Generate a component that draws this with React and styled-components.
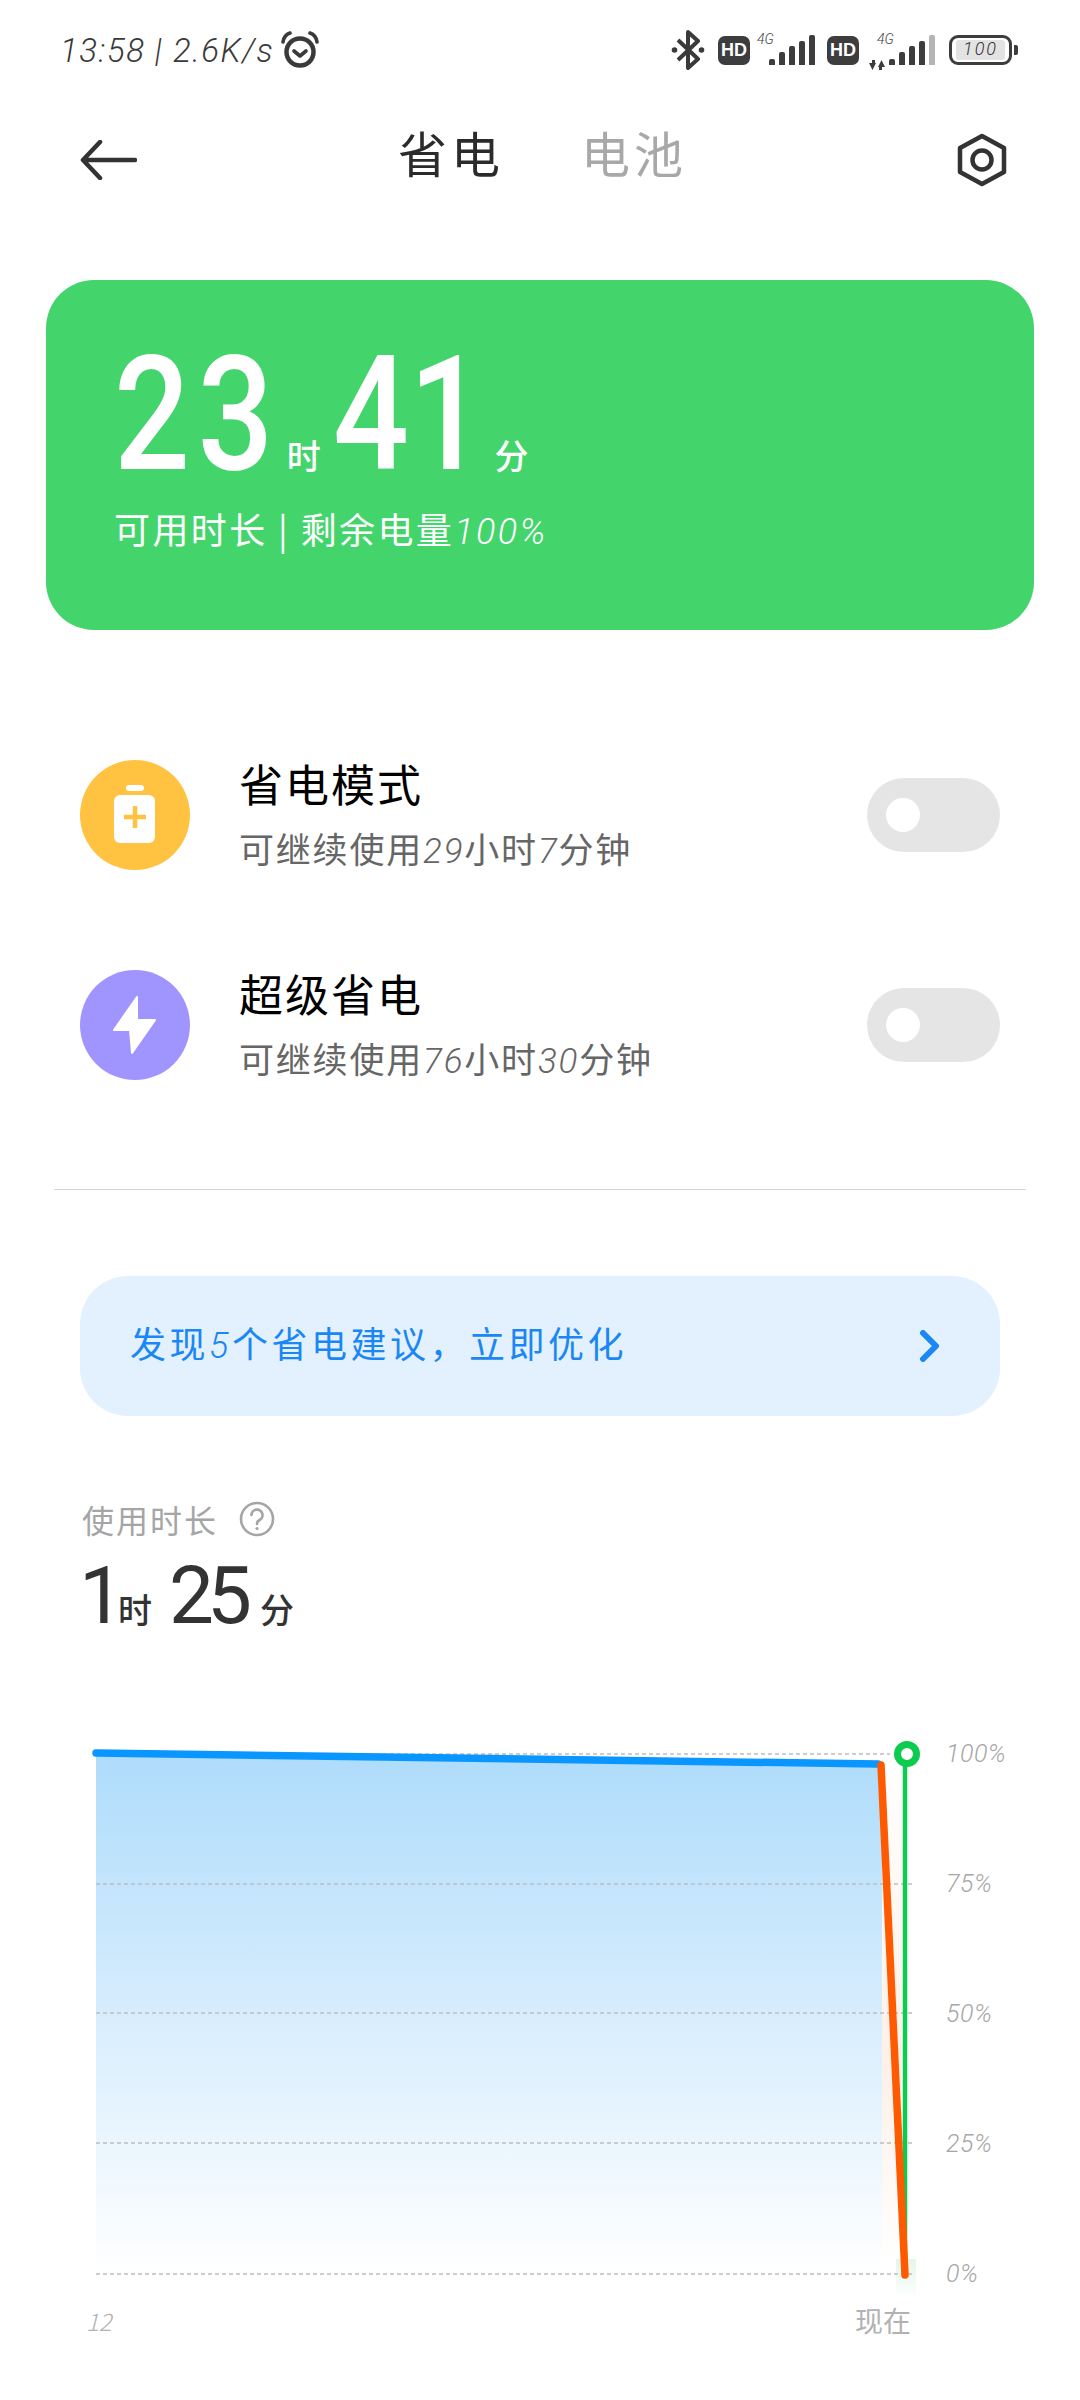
import React from "react";
import styled, { createGlobalStyle } from "styled-components";

const Global = createGlobalStyle`
  html, body { margin: 0; padding: 0; background: #fff; }
  body { font-family: Roboto, "Noto Sans CJK SC", sans-serif; }
`;

const Page = styled.div`
  width: 1080px;
  height: 2400px;
  overflow: hidden;
  background: #fff;
  display: flex;
  flex-direction: column;
`;

const Num = styled.span`
  font-family: Roboto, sans-serif;
  font-style: italic;
  font-weight: 300;
`;

/* status bar */
const StatusBar = styled.div`
  height: 100px;
  flex: none;
  display: flex;
  align-items: center;
  padding: 0 62px 0 60px;
  color: #3a3a3a;
`;

const Clock = styled.span`
  font-family: Roboto, sans-serif;
  font-style: italic;
  font-weight: 300;
  font-size: 33px;
  letter-spacing: 1.5px;
  white-space: nowrap;
`;

const StatusIcons = styled.div`
  margin-left: auto;
  display: flex;
  align-items: center;
`;

const HdBadge = styled.span`
  width: 32px;
  height: 29px;
  border-radius: 7px;
  background: #3d3d3d;
  color: #fff;
  font: 700 18px "Liberation Sans", sans-serif;
  display: flex;
  align-items: center;
  justify-content: center;
  margin-left: ${(p) => p.$left}px;
`;

const Signal = styled.span`
  position: relative;
  display: flex;
  align-items: flex-end;
  gap: 4px;
  height: 30px;
  margin-left: ${(p) => p.$left}px;
`;

const Bar = styled.i`
  display: block;
  width: 6px;
  height: ${(p) => p.$h}px;
  border-radius: 2px 2px 0 0;
  background: ${(p) => (p.$dim ? "#b5b5b5" : "#3d3d3d")};
`;

const NetLabel = styled.span`
  position: absolute;
  top: -4px;
  left: ${(p) => p.$x}px;
  font-family: Roboto, sans-serif;
  font-style: italic;
  font-weight: 300;
  font-size: 14px;
  color: #3d3d3d;
`;

const Battery = styled.span`
  width: 63px;
  height: 30px;
  box-sizing: border-box;
  border: 3.5px solid #3d3d3d;
  border-radius: 9px;
  margin-left: 14px;
  padding: 2px 4px;
  display: flex;
`;

const BatteryFill = styled.span`
  flex: 1;
  background: #e3e3e3;
  border-radius: 3px;
  font-family: Roboto, sans-serif;
  font-style: italic;
  font-weight: 300;
  font-size: 18px;
  letter-spacing: 2px;
  line-height: 18px;
  text-align: center;
  color: #333;
`;

const BatteryNub = styled.span`
  width: 4px;
  height: 10px;
  margin-left: 2px;
  border-radius: 0 2px 2px 0;
  background: #3d3d3d;
`;

/* header */
const Header = styled.div`
  height: 120px;
  flex: none;
  display: flex;
  align-items: center;
  padding: 0 73px 0 80px;
`;

const Tabs = styled.div`
  display: flex;
  gap: 77px;
  margin-left: 261px;
  margin-top: -16px;
`;

const Tab = styled.span`
  font-family: "Noto Sans CJK SC", sans-serif;
  font-size: 49px;
  line-height: 56px;
  letter-spacing: 4px;
  color: ${(p) => (p.$active ? "#2b2b2b" : "#a8a8a8")};
`;

const Settings = styled.svg`
  margin-left: auto;
`;

/* green summary card */
const Card = styled.div`
  height: 350px;
  flex: none;
  box-sizing: border-box;
  margin: 60px 46px 0;
  padding: 60px 0 0 68px;
  border-radius: 48px;
  background: #43d56c;
  color: #fff;
`;

const TimeRow = styled.div`
  display: flex;
  align-items: baseline;
  height: 150px;
`;

/* the digits in the reference are narrower than Roboto's */
const BigNum = styled.span`
  font-family: Roboto, sans-serif;
  font-weight: 500;
  font-size: 159px;
  line-height: 150px;
  letter-spacing: ${(p) => p.$track || 0}px;
  transform: scaleX(0.84);
  transform-origin: 0 50%;
  margin-right: -29px;
  margin-left: ${(p) => p.$left || 0}px;
`;

const Unit = styled.span`
  font-family: "Noto Sans CJK SC", sans-serif;
  font-weight: 500;
  font-size: 34px;
  margin-left: ${(p) => p.$left}px;
`;

const CardSub = styled.div`
  margin-top: 14px;
  font-family: "Noto Sans CJK SC", sans-serif;
  font-size: 36px;
  line-height: 48px;
  letter-spacing: 2.4px;
  white-space: nowrap;
`;

/* mode rows */
const Modes = styled.div`
  margin-top: 130px;
  display: flex;
  flex-direction: column;
  gap: 100px;
`;

const Mode = styled.div`
  height: 110px;
  display: flex;
  align-items: center;
  padding: 0 80px;
`;

const ModeBadge = styled.svg`
  flex: none;
  margin-right: 49px;
`;

const ModeText = styled.div`
  display: flex;
  flex-direction: column;
  gap: 14px;
  white-space: nowrap;
`;

const ModeTitle = styled.div`
  font-family: "Noto Sans CJK SC", sans-serif;
  font-size: 44px;
  line-height: 56px;
  letter-spacing: 2px;
  color: #000;
`;

const ModeSub = styled.div`
  font-family: "Noto Sans CJK SC", sans-serif;
  font-size: 35px;
  line-height: 46px;
  letter-spacing: 1.8px;
  color: #666;
`;

const Toggle = styled.div`
  margin-left: auto;
  width: 133px;
  height: 74px;
  box-sizing: border-box;
  padding-left: 19px;
  border-radius: 37px;
  background: #e5e5e5;
  display: flex;
  align-items: center;
`;

const Thumb = styled.span`
  width: 34px;
  height: 34px;
  border-radius: 50%;
  background: #fff;
`;

const Divider = styled.div`
  height: 1px;
  flex: none;
  margin: 109px 54px 0;
  background: #d6d6d6;
`;

/* tip banner */
const Banner = styled.div`
  height: 140px;
  flex: none;
  margin: 86px 80px 0;
  padding: 0 59px 0 50px;
  border-radius: 48px;
  background: #e3f1ff;
  display: flex;
  align-items: center;
  justify-content: space-between;
  color: #1a87f5;
`;

const BannerText = styled.span`
  font-family: "Noto Sans CJK SC", sans-serif;
  font-size: 36px;
  letter-spacing: 3.5px;
  margin-top: -8px;
`;

/* usage */
const Usage = styled.div`
  margin: 84px 0 0 82px;
  flex: none;
`;

const UsageLabel = styled.div`
  display: flex;
  align-items: center;
  gap: 21px;
  height: 38px;
  font-family: "Noto Sans CJK SC", sans-serif;
  font-size: 32px;
  letter-spacing: 2px;
  color: #a5a5a5;
`;

const UsageTime = styled.div`
  display: flex;
  align-items: baseline;
  margin-top: 18px;
  height: 80px;
  color: #333;
`;

const UsageNum = styled.span`
  font-family: Roboto, sans-serif;
  font-size: 80px;
  line-height: 80px;
  letter-spacing: -7px;
  margin-left: ${(p) => p.$left || 0}px;
`;

const UsageUnit = styled.span`
  font-family: "Noto Sans CJK SC", sans-serif;
  font-weight: 500;
  font-size: 34px;
  margin-left: ${(p) => p.$left}px;
`;

/* chart */
const ChartRow = styled.div`
  margin-top: 98px;
  padding-left: 90px;
  height: 570px;
  flex: none;
  display: flex;
`;

const YAxis = styled.div`
  margin-left: 26px;
  display: flex;
  flex-direction: column;
  gap: 90px;
`;

const AxisLabel = styled.span`
  height: 40px;
  line-height: 40px;
  font-family: Roboto, sans-serif;
  font-style: italic;
  font-weight: 300;
  font-size: 25px;
  letter-spacing: 0.5px;
  color: #a6a6a6;
`;

const XAxis = styled.div`
  display: flex;
  justify-content: space-between;
  align-items: center;
  padding: 0 169px 0 86px;
  height: 36px;
  flex: none;
  margin-top: -2px;
  color: #b2b2b2;
`;

const XLabel = styled.span`
  font-family: "Noto Sans CJK SC", sans-serif;
  font-size: ${(p) => (p.$num ? 24 : 28)}px;
  font-style: ${(p) => (p.$num ? "italic" : "normal")};
  font-weight: ${(p) => (p.$num ? 300 : 400)};
`;

const StatusGlyphs = {
  alarm: (
    <svg width="40" height="38" viewBox="0 0 40 38" fill="none" stroke="#3a3a3a" style={{ marginLeft: 6 }}>
      <circle cx="20" cy="21" r="13.5" strokeWidth="4.5" />
      <path d="M14 20l6 5 6-5" strokeWidth="3.6" strokeLinecap="round" strokeLinejoin="round" />
      <path d="M3 11 Q4 4 10 2M37 11 Q36 4 30 2" strokeWidth="3.6" strokeLinecap="round" />
    </svg>
  ),
  bluetooth: (
    <svg width="36" height="40" viewBox="0 0 34 40" fill="none" stroke="#3a3a3a" strokeWidth="4">
      <path d="M7 10 L27 29 L17 38 V2 L27 11 L7 30" strokeLinejoin="round" />
      <circle cx="3.5" cy="20" r="2.8" fill="#3a3a3a" stroke="none" />
      <circle cx="30.5" cy="20" r="2.8" fill="#3a3a3a" stroke="none" />
    </svg>
  ),
  arrows: (
    <svg width="16" height="10" viewBox="0 0 16 10" fill="#3d3d3d" style={{ marginLeft: 10, marginRight: 4, alignSelf: "flex-end" }}>
      <path d="M0 3H3V0H6V3H7L3.5 10ZM16 7H13V10H10V7H9L12.5 0Z" />
    </svg>
  ),
};

const grid = [20, 150, 279, 409, 540];

const Chart = () => (
  <svg width="830" height="570" viewBox="0 0 830 570" fill="none" style={{ flex: "none" }}>
    <defs>
      <linearGradient id="areaFill" x1="0" y1="0" x2="0" y2="1">
        <stop offset="0" stopColor="#aedcfb" />
        <stop offset="0.45" stopColor="#d3ebfd" />
        <stop offset="1" stopColor="#ffffff" />
      </linearGradient>
      <linearGradient id="dropFill" x1="0" y1="0" x2="0" y2="1">
        <stop offset="0" stopColor="#ffffff" />
        <stop offset="0.6" stopColor="#fdf0e8" />
        <stop offset="1" stopColor="#ffffff" />
      </linearGradient>
      <linearGradient id="glowFill" x1="0" y1="0" x2="0" y2="1">
        <stop offset="0" stopColor="#e3f6e9" />
        <stop offset="1" stopColor="#ffffff" />
      </linearGradient>
    </defs>
    <path d="M6 19 L792 30 V540 H6 Z" fill="url(#areaFill)" />
    <path d="M792 30 H812 V530 H792 Z" fill="url(#dropFill)" />
    <rect x="806" y="525" width="20" height="40" fill="url(#glowFill)" />
    {grid.map((y) => (
      <line key={y} x1="6" x2={y === 20 ? 800 : 823} y1={y} y2={y} stroke="#bdbdbd" strokeWidth="1.5" strokeDasharray="4 3" />
    ))}
    <line x1="815" x2="815" y1="24" y2="530" stroke="#0ccb4f" strokeWidth="4.5" />
    <circle cx="817" cy="20" r="9.5" fill="#fff" stroke="#0ccb4f" strokeWidth="7" />
    <line x1="6" y1="19" x2="788" y2="30" stroke="#0a96ff" strokeWidth="7.5" strokeLinecap="round" />
    <line x1="791" y1="31" x2="815" y2="541" stroke="#ff5a00" strokeWidth="7.5" strokeLinecap="round" />
  </svg>
);

const App = () => (
  <Page>
    <Global />
    <StatusBar>
      <Clock>13:58 | 2.6K/s</Clock>
      {StatusGlyphs.alarm}
      <StatusIcons>
        {StatusGlyphs.bluetooth}
        <HdBadge $left={12}>HD</HdBadge>
        <Signal $left={19}>
          <NetLabel $x={-12}>4G</NetLabel>
          <Bar $h={6} /><Bar $h={13} /><Bar $h={19} /><Bar $h={24} /><Bar $h={30} />
        </Signal>
        <HdBadge $left={12}>HD</HdBadge>
        {StatusGlyphs.arrows}
        <Signal $left={0}>
          <NetLabel $x={-12}>4G</NetLabel>
          <Bar $h={6} /><Bar $h={13} /><Bar $h={19} /><Bar $h={24} /><Bar $h={30} $dim />
        </Signal>
        <Battery>
          <BatteryFill>100</BatteryFill>
        </Battery>
        <BatteryNub />
      </StatusIcons>
    </StatusBar>

    <Header>
      <svg width="57" height="40" viewBox="0 0 57 40" fill="none" stroke="#333" strokeWidth="4.5" strokeLinecap="round" strokeLinejoin="round">
        <path d="M20 2 L3 20 L20 38M3 20 H55" />
      </svg>
      <Tabs>
        <Tab $active>省电</Tab>
        <Tab>电池</Tab>
      </Tabs>
      <Settings width="50" height="54" viewBox="0 0 50 54" fill="none" stroke="#333" strokeWidth="4.5">
        <path d="M25 3 L47 15 V39 L25 51 L3 39 V15 Z" strokeLinejoin="round" />
        <circle cx="25" cy="27" r="9.5" />
      </Settings>
    </Header>

    <Card>
      <TimeRow>
        <BigNum $track={9}>23</BigNum>
        <Unit $left={3}>时</Unit>
        <BigNum $left={12}>41</BigNum>
        <Unit $left={10}>分</Unit>
      </TimeRow>
      <CardSub>可用时长 | 剩余电量<Num>100%</Num></CardSub>
    </Card>

    <Modes>
      <Mode>
        <ModeBadge width="110" height="110" viewBox="0 0 110 110">
          <circle cx="55" cy="55" r="55" fill="#ffc341" />
          <rect x="46" y="25" width="18" height="6" rx="3" fill="#fff" />
          <rect x="34" y="35" width="41" height="48" rx="6" fill="#fff" />
          <path d="M44 57 H66 M55 46 V68" stroke="#ffc341" strokeWidth="4.5" />
        </ModeBadge>
        <ModeText>
          <ModeTitle>省电模式</ModeTitle>
          <ModeSub>可继续使用<Num>29</Num>小时<Num>7</Num>分钟</ModeSub>
        </ModeText>
        <Toggle><Thumb /></Toggle>
      </Mode>
      <Mode>
        <ModeBadge width="110" height="110" viewBox="0 0 110 110">
          <circle cx="55" cy="55" r="55" fill="#a095ff" />
          <path d="M57 27 L34 60 H50 L52 83 L75 50 H57 Z" fill="#fff" stroke="#fff" strokeWidth="2" strokeLinejoin="round" />
        </ModeBadge>
        <ModeText>
          <ModeTitle>超级省电</ModeTitle>
          <ModeSub>可继续使用<Num>76</Num>小时<Num>30</Num>分钟</ModeSub>
        </ModeText>
        <Toggle><Thumb /></Toggle>
      </Mode>
    </Modes>

    <Divider />

    <Banner>
      <BannerText>发现<Num>5</Num>个省电建议{"\uFF0C"}立即优化</BannerText>
      <svg width="22" height="32" viewBox="0 0 22 32" fill="none" stroke="#1a87f5" strokeWidth="6" strokeLinecap="round" strokeLinejoin="round">
        <path d="M4 3 L17 16 L4 29" />
      </svg>
    </Banner>

    <Usage>
      <UsageLabel>
        使用时长
        <svg width="36" height="36" viewBox="0 0 36 36" fill="none" stroke="#a5a5a5" strokeWidth="2.6">
          <circle cx="18" cy="18" r="16" />
          <path d="M12.5 14 a5.5 5.5 0 1 1 8 5 q-2.5 1.3-2.5 4" strokeLinecap="round" />
          <circle cx="18" cy="27.5" r="1.6" fill="#a5a5a5" stroke="none" />
        </svg>
      </UsageLabel>
      <UsageTime>
        <UsageNum $left={-3}>1</UsageNum>
        <UsageUnit $left={1}>时</UsageUnit>
        <UsageNum $left={17}>25</UsageNum>
        <UsageUnit $left={15}>分</UsageUnit>
      </UsageTime>
    </Usage>

    <ChartRow>
      <Chart />
      <YAxis>
        <AxisLabel>100%</AxisLabel>
        <AxisLabel>75%</AxisLabel>
        <AxisLabel>50%</AxisLabel>
        <AxisLabel>25%</AxisLabel>
        <AxisLabel>0%</AxisLabel>
      </YAxis>
    </ChartRow>
    <XAxis>
      <XLabel $num>12</XLabel>
      <XLabel>现在</XLabel>
    </XAxis>
  </Page>
);

export default App;
